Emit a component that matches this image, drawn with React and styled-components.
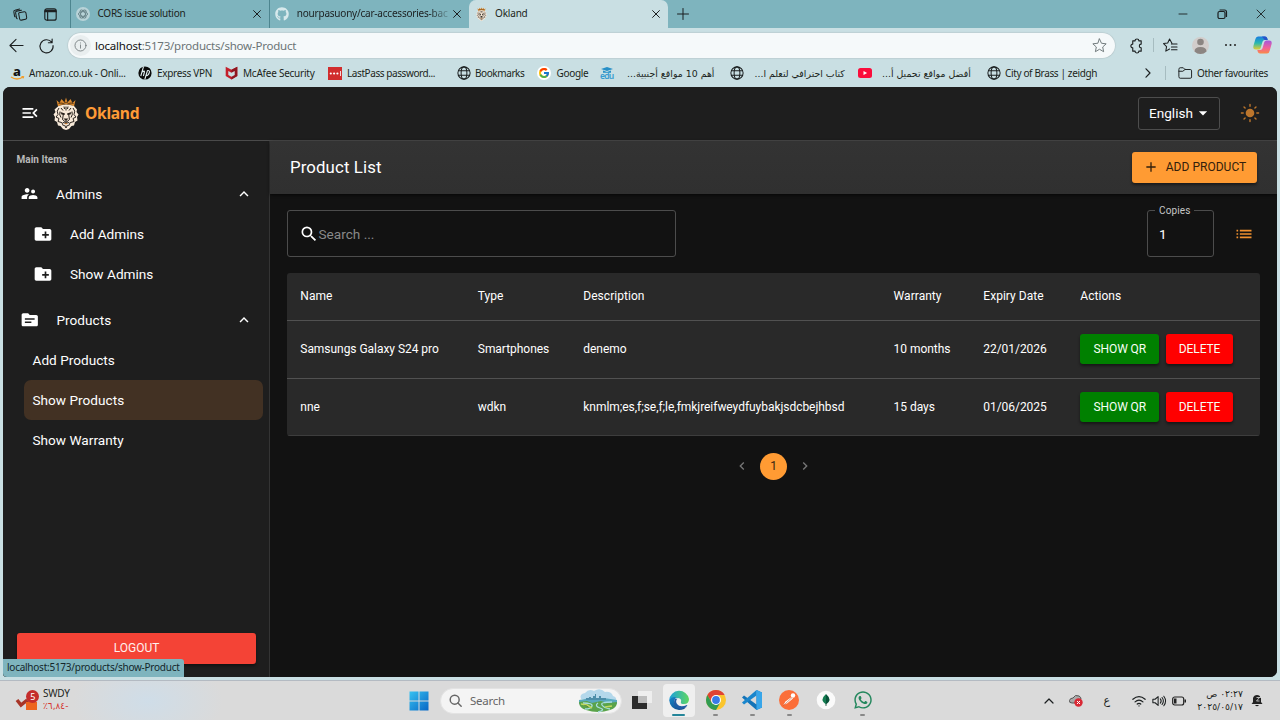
import React from "react";
import styled, { createGlobalStyle, css } from "styled-components";
import { FcGoogle } from "react-icons/fc";
import { FaGithub, FaWhatsapp } from "react-icons/fa";
import {
  MdMenuOpen, MdSupervisorAccount, MdCreateNewFolder, MdTopic, MdExpandLess,
  MdSearch, MdAdd, MdArrowDropDown, MdNavigateBefore, MdNavigateNext, MdList,
} from "react-icons/md";

const Global = createGlobalStyle`
  *, *::before, *::after { box-sizing: border-box; }
  html, body { margin: 0; padding: 0; overflow: hidden; background: #c9dfe3; }
  button { font: inherit; border: 0; margin: 0; padding: 0; background: none; color: inherit; }
  svg { display: block; flex: none; overflow: visible; }
`;

const ui = css`font-family: "Noto Sans", "DejaVu Sans", sans-serif;`;

const Screen = styled.div`
  width: 1280px; height: 720px; display: flex; flex-direction: column;
  overflow: hidden; background: #c9dfe3; color: #1b1f20; ${ui}
  white-space: nowrap;
`;

/* ---------- browser chrome ---------- */
const TitleBar = styled.header`
  height: 28px; flex: none; display: flex; align-items: center; background: #7eb4be;
`;
const TitleTools = styled.div`
  width: 70px; display: flex; gap: 16px; padding-left: 13px; align-items: center;
`;
const Tab = styled.div`
  width: 199.3px; height: 28px; display: flex; align-items: center;
  padding: 0 8px 0 5px; font-size: 10px; letter-spacing: ${(p) => p.$ls || 0}px;
  background: ${(p) => (p.$active ? "#c9dfe3" : "transparent")};
  border-left: 1px solid ${(p) => (p.$active ? "#c9dfe3" : "#4d858f")};
  border-radius: ${(p) => (p.$active ? "7px 7px 0 0" : 0)};
`;
const TabTitle = styled.span`
  flex: 1; margin: 0 0 1px 7.5px; line-height: 15px;
  ${(p) => p.$fade && css`mask-image: linear-gradient(90deg, #000 85%, #0004 96%);`}
`;
const NewTab = styled.div`padding-left: 9px;`;
const WindowControls = styled.div`
  margin-left: auto; display: flex; gap: 27px; padding-right: 13px;
`;
const AddressRow = styled.div`
  height: 35px; flex: none; display: flex; align-items: center; padding: 0 0 1px 9px;
`;
const NavButtons = styled.div`width: 59px; display: flex; gap: 15px;`;
const AddressBar = styled.div`
  width: 1047px; height: 25px; border-radius: 13px; background: #f5f9fa;
  box-shadow: 0 0 1px 0.5px #b3c4c7; display: flex; align-items: center; padding: 0 8px 0 2px;
  font-size: 11.5px; letter-spacing: -0.21px; color: #6b7476;
`;
const InfoBadge = styled.span`
  width: 21px; height: 21px; border-radius: 50%; background: #e9eeef; margin-right: 4px;
  display: grid; place-items: center;
`;
const UrlText = styled.span`flex: 1; b { font-weight: 400; color: #111; }`;
const AddressActions = styled.div`
  flex: 1; display: grid; align-items: center; padding-left: 14px;
  grid-template-columns: 24px 10px 29px 32px 29px 19px;
`;
const Divider = styled.i`width: 1px; height: 14px; background: #a6bcc0;`;
const BookmarkRow = styled.nav`
  height: 24px; flex: none; display: flex; align-items: center; padding: 0 0 4px 10px;
  font-size: 10px;
`;
const Bookmark = styled.div`
  width: ${(p) => p.$w}px; display: flex; align-items: center; gap: ${(p) => p.$gap || 4}px;
  letter-spacing: ${(p) => p.$ls ?? -0.2}px;
`;
const ArabicText = styled.span`
  font-family: "DejaVu Sans", sans-serif; font-size: 9.4px; letter-spacing: 0;
`;

/* ---------- app ---------- */
const AppFrame = styled.div`
  position: relative; margin: 0 3px; height: 590px; flex: none; overflow: hidden;
  border-radius: 7px 7px 7px 4px; background: #121212; color: #fff;
  font-family: Roboto, sans-serif; display: flex; flex-direction: column;
`;
const AppBar = styled.div`
  height: 54px; flex: none; background: #1e1e1e; border-bottom: 1px solid #4a4a4a;
  display: flex; align-items: center; padding: 0 17px 1px 17px;
`;
const MenuToggle = styled.button`width: 33px;`;
const Brand = styled.span`
  margin-left: 6px; font: 700 15.6px "Noto Sans", sans-serif; color: #ff9b36; letter-spacing: -0.3px;
`;
const LanguageSelect = styled.button`
  margin-left: auto; margin-right: 20px; width: 82px; height: 33px; border: 1px solid #4d4d4d; border-radius: 3px;
  display: flex; align-items: center; padding-left: 10px; font-size: 13.6px; letter-spacing: 0;
`;
const AppBody = styled.div`flex: 1; display: flex; min-height: 0;`;
const Sidebar = styled.aside`
  width: 267px; background: #1e1e1e; border-right: 1px solid #343434;
  display: flex; flex-direction: column; padding: 12px 0 13.5px;
`;
const SideHeading = styled.div`
  font-size: 10px; font-weight: 700; color: #b9b9b9; line-height: 14px; padding-left: 13.5px; margin-bottom: 6.5px;
  letter-spacing: 0.02px;
`;
const SideItem = styled.div`
  height: 40px; display: flex; align-items: center; font-size: 13.6px; letter-spacing: 0.02px;
  margin-left: ${(p) => p.$ml || 17}px; margin-right: 6px; padding-left: ${(p) => p.$pl || 0}px; padding-right: 10.5px;
  gap: 17px; border-radius: 7px; background: ${(p) => (p.$active ? "#423123" : "transparent")};
  svg:nth-of-type(2) { margin-left: auto; }
`;
const SideGroup = styled.div`margin-bottom: 6.5px;`;
const LogoutButton = styled.button`
  margin: auto 13px 0 14px; height: 30.5px; background: #f44336; border-radius: 3px;
  font-size: 12px; box-shadow: 0 2px 3px #0006; color: #fff0ee;
`;
const Main = styled.main`flex: 1; min-width: 0; background: #121212;`;
const PageHeader = styled.div`
  height: 53px; background: linear-gradient(#333, #303030); display: flex; align-items: center; justify-content: space-between;
  padding: 0 20px 1px; box-shadow: 0 1px 3px #000a;
`;
const PageTitle = styled.h1`margin: 0; font-size: 16.8px; font-weight: 400; letter-spacing: 0.12px;`;
const AddButton = styled.button`
  width: 125px; height: 31px; border-radius: 3px; background: #ff9b33; color: #33200c;
  display: flex; align-items: center; justify-content: center; gap: 7px; font-size: 12px;
  letter-spacing: 0.02px; box-shadow: 0 2px 3px #0007;
`;
const Filters = styled.div`
  display: flex; align-items: center; padding: 16px 23.5px 16px 17px; height: 79px;
`;
const SearchField = styled.div`
  width: 389px; height: 47px; border: 1px solid #4c4c4c; border-radius: 3px; display: flex; align-items: center;
  padding-left: 10.5px; font-size: 13.6px; color: #898989;
  svg { color: #fff; }
`;
const CopiesField = styled.div`
  position: relative; width: 67px; height: 47px; border: 1px solid #4c4c4c; border-radius: 3px;
  margin-left: auto; margin-right: 19.5px; display: flex; align-items: center; padding-left: 11px; font-size: 13.6px;
`;
const CopiesLabel = styled.span`
  position: absolute; top: -7px; left: 7px; padding: 0 4px; background: #121212; color: #c6c6c6;
  font-size: 10px; line-height: 13px; letter-spacing: 0.12px;
`;
const Table = styled.div`
  margin: 0 17px; background: #292929; border-radius: 3px; overflow: hidden;
`;
const Row = styled.div`
  display: grid; grid-template-columns: 177.5px 105.5px 310.3px 89.7px 97px 1fr; align-items: center;
  height: ${(p) => p.$h}px; border-bottom: 1px solid ${(p) => (p.$last ? "#3d3d3d" : "#515151")};
  padding-bottom: ${(p) => (p.$last ? 0 : 1)}px;
  font-size: 12px; letter-spacing: ${(p) => (p.$head ? 0.04 : -0.04)}px;
  > * { padding-left: 13.3px; }
`;
const Actions = styled.div`display: flex; gap: 6.5px;`;
const ActionButton = styled.button`
  width: ${(p) => (p.$danger ? 67.5 : 79)}px; height: 30.5px; border-radius: 3px; font-size: 12px;
  background: ${(p) => (p.$danger ? "#ff0000" : "#008000")}; letter-spacing: -0.12px; color: #f8fff5;
  box-shadow: 0 2px 3px #0007;
`;
const Pagination = styled.div`
  margin-top: 16.5px; display: flex; justify-content: center; align-items: center; gap: 10px; color: #777;
`;
const CurrentPage = styled.span`
  width: 27px; height: 27px; border-radius: 50%; background: #ff9b33; color: #39240f;
  display: grid; place-items: center; font-size: 12px;
`;
const LinkStatus = styled.div`
  position: absolute; left: 0; bottom: 0; width: 181px; height: 18px; background: #7eb4be; color: #13262a;
  border-radius: 0 3px 0 0; padding-left: 4px; line-height: 17px; font-size: 10px; letter-spacing: -0.25px; ${ui}
`;

/* ---------- taskbar ---------- */
const Taskbar = styled.footer`
  height: 40px; margin-top: auto; flex: none; display: flex; align-items: center; border-top: 1px solid #b3bac2;
  background: radial-gradient(ellipse 75px 45px at 148px 20px, #cfdde8, #cfdde800), #dadada;
`;
const StockWidget = styled.div`
  width: 408.500px; padding-left: 16px; display: flex; gap: 3px; align-items: center;
`;
const StockText = styled.div`
  font-size: 10px; line-height: 13px; letter-spacing: -0.25px; padding-bottom: 1px;
  small { display: block; font-size: 9px; color: #d5342e; font-family: "DejaVu Sans", sans-serif; letter-spacing: -0.5px; }
`;
const TaskSearch = styled.div`
  margin-left: 11.5px; width: 182px; height: 26px; border-radius: 13px; background: #f4f4f4; border: 1px solid #e3e3e3;
  display: flex; align-items: center; padding: 0 3px 0 8px; gap: 8px; font-size: 11.5px; color: #666; letter-spacing: -0.25px;
  svg:last-child { margin-left: auto; }
`;
const TaskApps = styled.div`display: flex; padding-left: 4px;`;
const TaskApp = styled.div`
  width: 32px; height: 33px; margin-right: 4.8px; border-radius: 4px; display: flex; flex-direction: column; align-items: center;
  padding-top: 6px; gap: 4px; background: ${(p) => (p.$active ? "#efefef" : "transparent")};
  &::after {
    content: ""; width: ${(p) => (p.$active ? 13 : 5)}px; height: 2px; border-radius: 1px;
    background: ${(p) => (p.$active ? "#25869a" : p.$idle ? "transparent" : "#888")};
  }
`;
const Tray = styled.div`margin-left: auto; display: flex; align-items: center; padding-right: 17px;`;
const TrayItem = styled.span`width: ${(p) => p.$w}px; display: flex; font: 11px "DejaVu Sans", sans-serif;`;
const Clock = styled.div`
  width: 46px; direction: rtl; text-align: right; font: 9.2px/12.5px "DejaVu Sans", sans-serif;
  margin-right: 8px; letter-spacing: -0.35px;
`;

/* ---------- drawings ---------- */
const Icon = ({ s = 14, vb = 16, w = 1, children }) => (
  <svg width={s} height={s} viewBox={`0 0 ${vb} ${vb}`} fill="none" stroke="currentColor" strokeWidth={w}
    strokeLinecap="round" strokeLinejoin="round">{children}</svg>
);
const Cross = () => <Icon s={8} vb={8} w={1}><path d="M.6.6l6.8 6.8M7.4.6L.6 7.4" /></Icon>;
const Globe = () => (
  <Icon s={14} w={1.15}><circle cx="8" cy="8" r="7" /><ellipse cx="8" cy="8" rx="3.3" ry="7" /><path d="M1.6 5.5h12.8M1.6 10.5h12.8" /></Icon>
);
const Lion = ({ w = 26, h = 33 }) => (
  <svg width={w} height={h} viewBox="0 0 52 66">
    <path d="M7 6l6 6 4-8 6 7 3-10 3 10 6-7 4 8 6-6-3 13q-16-6-32 0z" fill="#dd8a2d" />
    <path d="M11 13l5-1 5 1 5-3 5 3 5-1 5 1M13 17q13-5 26 0" stroke="#3b2410" strokeWidth="1.6" fill="none" />
    <path d="M11 18q15-6 31 0l6 7-1 5 4 5-3 5 1 7-5 3-2 7-5 1-5 6-6 2-6-2-5-6-5-1-2-7-5-3 1-7-3-5 4-5-2-5z" fill="#f7e9d8" />
    <g fill="none" stroke="#29221d" strokeWidth="2">
      <path d="M12 22q-6 6-2 13l-4 5 6 3-2 6 7 2M40 22q6 6 2 13l4 5-6 3 2 6-7 2M16 22l4 5M36 22l-4 5M26 19v8M22 19l1 5M30 19l-1 5M14 29q-2 7 2 12M38 29q2 7-2 12M17 50l4 8M35 50l-4 8" />
      <path d="M21 33l-2 12 7 6 7-6-2-12M26 47v4M20 51q6 3 12 0M23 56l3 6 3-6" />
    </g>
    <path d="M15 30l9 3-1 3-6-1zM37 30l-9 3 1 3 6-1zM21 43h10l-5 5z" fill="#29221d" />
    <path d="M23 52h6l-3 3z" fill="#c77526" />
  </svg>
);
const Amazon = () => (
  <svg width="15" height="15" viewBox="0 0 15 15">
    <text x="3" y="9.5" fontFamily="Noto Sans" fontSize="13" fontWeight="800" fill="#111">a</text>
    <path d="M1 11q6 4 12 0" stroke="#f39b25" strokeWidth="1.3" fill="none" /><path d="M11.5 10.5h2.3l-.7 2" stroke="#f39b25" fill="none" />
  </svg>
);
const Hp = () => (
  <svg width="14" height="14" viewBox="0 0 14 14"><circle cx="7" cy="7" r="6.6" fill="#0b0b0b" />
    <path d="M5.5.6L2.8 10M4 6q3-2 2.3.5L5.4 10M9.5 4.500L6.800 13.400M9 4.700q3.200-.7 2.300 2-.7 3-3.400 3" stroke="#e4f2f4" fill="none" strokeWidth="1.1" /></svg>
);
const Mcafee = () => (
  <svg width="13" height="14" viewBox="0 0 13 14"><path d="M.7.8l5.8 3 5.8-3v9.3l-5.8 3.4L.7 10z" fill="#c4202c" />
    <path d="M6.5 3.8l5.8-3v9.3l-5.8 3.4v-3l3-1.6V5.3l-3 1.5z" fill="#8f1620" /><path d="M3.3 5l3.2 1.8L9.7 5v4L6.5 10.8 3.3 9z" fill="#c9dfe3" /></svg>
);
const LastPass = () => (
  <svg width="14" height="13" viewBox="0 0 14 13"><path fill="#d12d2d" d="M0 0h14v13H0z" />
    <g fill="#fff"><circle cx="2.8" cy="6.5" r="1.1" /><circle cx="6.1" cy="6.5" r="1.1" /><circle cx="9.4" cy="6.5" r="1.1" /><path d="M12 4h.8v5H12z" /></g></svg>
);
const GoogleMark = styled.span`
  width: 14px; height: 14px; border-radius: 50%; background: #fff; display: grid; place-items: center;
`;
const Edu = () => (
  <svg width="15" height="15" viewBox="0 0 15 15"><path d="M7 1l6 2-6 2-6-2zM3 4.5l4 1.4 4-1.4v2.3H3z" fill="#268fc7" />
    <text x="0" y="13" fontFamily="Noto Sans" fontSize="8.5" fontWeight="600" fill="#379bd0" textLength="14">edu</text></svg>
);
const YouTube = () => (
  <svg width="14" height="10" viewBox="0 0 14 10"><rect width="14" height="10" rx="2.5" fill="#fa0d3b" /><path d="M5.5 3l3.6 2-3.6 2z" fill="#fff" /></svg>
);
const Sun = () => (
  <svg width="20" height="20" viewBox="0 0 20 20" stroke="#bd762c" strokeWidth="1.4" strokeLinecap="round">
    <circle cx="10" cy="10" r="4.3" fill="#bd762c" stroke="none" />
    <path d="M10 1.4v1.8M10 16.8v1.8M1.4 10h1.8M16.8 10h1.8M4 4l1.1 1.1M14.9 14.9L16 16M16 4l-1.1 1.1M4 16l1.1-1.1" /></svg>
);
const Copilot = () => (
  <svg width="19" height="18" viewBox="0 0 19 18">
    <defs>
      <linearGradient id="cpA" x1="0" y1="0" x2="0" y2="1"><stop stopColor="#187be2" /><stop offset=".5" stopColor="#29b9af" /><stop offset="1" stopColor="#e9cd2f" /></linearGradient>
      <linearGradient id="cpB" x1="0" y1="0" x2="0" y2="1"><stop stopColor="#a258dc" /><stop offset=".55" stopColor="#f0609b" /><stop offset="1" stopColor="#fb8a46" /></linearGradient>
    </defs>
    <path d="M5 .5h7q1.7 0 2.3 2l.4 1.5h-3q-1.7 0-2.2 1.7L7.7 12q-.5 1.6-2.2 1.6H3Q-.3 13.6.4 10L2.4 3Q3 .5 5 .5z" fill="url(#cpA)" />
    <path d="M14 17.5H7q-1.7 0-2.3-2L4.3 14h3q1.7 0 2.2-1.7L11.3 6q.5-1.6 2.2-1.6H16q3.3 0 2.6 3.6l-2 7q-.6 2.5-2.6 2.5z" fill="url(#cpB)" />
    <path d="M9 .5h3q1.7 0 2.3 2l.4 1.5h-3z" fill="#2754c9" />
  </svg>
);
const Avatar = () => (
  <svg width="17" height="17" viewBox="0 0 17 17"><circle cx="8.5" cy="8.5" r="8.5" fill="#d2cdcb" /><circle cx="8.5" cy="5" r="3.3" fill="#8b8582" /><path d="M2.5 14.5q0-4.5 6-4.500t6 4.500q-2.500 2.500-6 2.500t-6-2.500z" fill="#8b8582" /></svg>
);
const Landscape = () => (
  <svg width="40" height="24" viewBox="0 0 40 24">
    <path d="M3 10q-2-5 4-6 4-5 9-2 6-4 11 1 6-1 8 4 4 1 3 5z" fill="#b4d8eb" />
    <path d="M1 11q18-4 38 0v4H1z" fill="#59a9bf" /><path d="M8 11V9h3V8h2v1h2V7h2V5h1v4h3V7h2v2h5v2z" fill="#4c8eaa" />
    <path d="M1 13l8-1 5 2 9-2 7 2 9-1q0 6-7 8-12 4-24 0-7-2-7-8z" fill="#5aa34a" />
    <path d="M5 14q10 0 9 3t-7 3M34 13q-12 0-10 3t8 4M20 14q-4 3 2 5t-2 4" stroke="#a8dce0" strokeWidth="1.3" fill="none" />
    <path d="M3 15l6 1 5 3M27 18l7-1" stroke="#bfd85f" strokeWidth="1.5" />
  </svg>
);
const Windows = () => (
  <svg width="20" height="20" viewBox="0 0 20 20"><defs><linearGradient id="winG" x1="0" y1="0" x2="1" y2="1"><stop stopColor="#37c2f1" /><stop offset="1" stopColor="#0866c5" /></linearGradient></defs>
    <path fill="url(#winG)" d="M.5.5h9v9h-9zM10.5.5h9v9h-9zM.5 10.5h9v9h-9zM10.5 10.5h9v9h-9z" /></svg>
);
const TaskView = () => (
  <svg width="20" height="20" viewBox="0 0 20 20"><path d="M0 6h15v13H0z" fill="#2c2c2c" /><path d="M6 1h14v12H6z" fill="#f0f0f0" opacity=".92" /><path d="M6 6h9v7H6z" fill="#bdbdbd" /></svg>
);
const Edge = () => (
  <svg width="20" height="20" viewBox="0 0 20 20"><defs><linearGradient id="edA"><stop stopColor="#1ba0dc" /><stop offset="1" stopColor="#5ed760" /></linearGradient><linearGradient id="edB" x1="0" y1="0" x2="1" y2="1"><stop stopColor="#1686ca" /><stop offset="1" stopColor="#123e7d" /></linearGradient></defs>
    <path d="M.2 10A10 10 0 0 1 20 9q0 5-5 5-4 0-3-2 1-4-4-4Q3 7 .2 10z" fill="url(#edA)" />
    <path d="M.2 10Q3 6 7.5 7.5q-3 2-2 6 2 5 8 4.5 3 0 4.5-1.500Q15 20 10 20 1 19 .2 10z" fill="url(#edB)" />
    <path d="M8.500 8.500Q6 11 8 14q3 4 10 1 .6 0 0 1-4 5-10 2-5-4-2-9z" fill="#1f5ba4" /></svg>
);
const Chrome = () => (
  <svg width="20" height="20" viewBox="0 0 20 20"><circle cx="10" cy="10" r="10" fill="#fbc52d" /><path d="M10 5h8.660A10 10 0 0 0 1.340 5L5.670 12.500z" fill="#df4335" /><path d="M1.340 5A10 10 0 0 0 10 20l4.330-7.500L10 10l-4.330 2.500z" fill="#319b52" /><circle cx="10" cy="10" r="5" fill="#fff" /><circle cx="10" cy="10" r="3.900" fill="#377be8" /></svg>
);
const VsCode = () => (
  <svg width="20" height="20" viewBox="0 0 20 20"><path d="M14.500 0L20 2.500v15L14.500 20 0 7.500 2 5.500l12.500 9z" fill="#1474b8" /><path d="M14.500 5.500L2 14.500l-2-2L14.500 0z" fill="#1a86cd" /><path d="M14.500 0L20 2.500v15L14.500 20z" fill="#38a6ea" /></svg>
);
const Postman = () => (
  <svg width="20" height="20" viewBox="0 0 20 20"><circle cx="10" cy="10" r="10" fill="#fb6e39" /><circle cx="14" cy="5.500" r="2.200" fill="#fff" /><path d="M12.500 7l1.500 1.500-6 5-3.500 1.500 2-3.500z" fill="#fff" /><path d="M4.500 15.500L13 7.500" stroke="#b84d29" strokeWidth=".6" /></svg>
);
const Mongo = () => (
  <svg width="20" height="20" viewBox="0 0 20 20"><circle cx="10" cy="10" r="9.300" fill="#fafafa" /><path d="M10 4q-7 6 0 10.500z" fill="#137b50" /><path d="M10 4q7 6 0 10.500z" fill="#075239" /><path d="M10 13.500v2.500" stroke="#456e5d" /></svg>
);
const Stock = () => (
  <svg width="24" height="22" viewBox="0 0 24 22"><path d="M1 10l4 5 5-4 3 3" stroke="#a83527" strokeWidth="3.500" fill="none" /><path d="M10 12h11v8H10z" fill="#ed651e" /><circle cx="16.500" cy="6.500" r="6.500" fill="#c42c2b" /><text x="14.200" y="9.800" fontSize="9" fontFamily="Noto Sans" fill="#fff">5</text></svg>
);

/* ---------- content ---------- */
const products = [
  { name: "Samsungs Galaxy S24 pro", type: "Smartphones", description: "denemo", warranty: "10 months", expiry: "22/01/2026" },
  { name: "nne", type: "wdkn", description: "knmlm;es,f;se,f;le,fmkjreifweydfuybakjsdcbejhbsd", warranty: "15 days", expiry: "01/06/2025" },
];
const bookmarks = [
  { w: 128, icon: <Amazon />, text: "Amazon.co.uk - Onli...", ls: -0.22 },
  { w: 87, icon: <Hp />, text: "Express VPN", gap: 5, ls: -0.3 },
  { w: 103, icon: <Mcafee />, text: "McAfee Security", gap: 5, ls: -0.24 },
  { w: 129, icon: <LastPass />, text: "LastPass password...", gap: 5, ls: -0.42 },
  { w: 80, icon: <Globe />, text: "Bookmarks", ls: -0.42 },
  { w: 63, icon: <GoogleMark><FcGoogle size={12} /></GoogleMark>, text: "Google", gap: 5.5, ls: -0.3 },
  { w: 130, icon: <Edu />, text: "أهم 10 مواقع أجنبية...", gap: 12, arabic: true },
  { w: 128, icon: <Globe />, text: "كتاب احترافي لتعلم ا...", gap: 10.5, arabic: true },
  { w: 129, icon: <YouTube />, text: "أفضل مواقع تحميل أ...", gap: 10, arabic: true },
  { w: 156, icon: <Globe />, text: "City of Brass | zeidgh", ls: -0.36 },
];

const Browser = () => (
  <>
    <TitleBar>
      <TitleTools>
        <Icon s={15} w={1.1}><path d="M6.500 6.200L12 5q1.500-.2 1.800 1.200l.8 5q.2 1.500-1.200 1.800l-4.500 1q-1.500.2-1.800-1.200l-1-5.500q-.2-1 .4-1.100z" /><path d="M4.500 12.500q-.7-.3-.8-1.200l-.9-5.100q-.2-1.500 1.200-1.800l5-1M2.200 10.500q-.5-.4-.6-1L.9 5.200q-.2-1.500 1.200-1.800l5-1.200" /></Icon>
        <Icon s={13} w={1.4}><rect x="1" y="1" width="14" height="14" rx="2.5" /><path d="M1 4.500h14M1.500 3h13M4.500 5v10" /></Icon>
      </TitleTools>
      <Tab $ls={-0.26}>
        <svg width="14" height="14" viewBox="0 0 14 14"><circle cx="7" cy="7" r="7" fill="#b8d3d8" /><g fill="none" stroke="#668187" strokeWidth=".9">{[0, 60, 120].map((a) => <ellipse key={a} cx="7" cy="7" rx="4.5" ry="2.3" transform={`rotate(${a} 7 7)`} />)}</g></svg>
        <TabTitle>CORS issue solution</TabTitle><Cross />
      </Tab>
      <Tab $ls={-0.22}><FaGithub size={14} color="#d7e9ec" /><TabTitle $fade>nourpasuony/car-accessories-bac</TabTitle><Cross /></Tab>
      <Tab $active $ls={-0.2}><Lion w={13} h={14} /><TabTitle>Okland</TabTitle><Cross /></Tab>
      <NewTab><Icon s={12} vb={12}><path d="M6 .5v11M.5 6h11" /></Icon></NewTab>
      <WindowControls>
        <Icon s={12} vb={12} w={0.9}><path d="M2 6h8" /></Icon>
        <Icon s={12} vb={12} w={1.2}><rect x="2" y="3.5" width="7" height="7" rx="1.5" /><path d="M4 2h4.5Q10.5 2 10.5 4v4.5" /></Icon>
        <Icon s={12} vb={12} w={0.9}><path d="M2 2l8 8M10 2l-8 8" /></Icon>
      </WindowControls>
    </TitleBar>
    <AddressRow>
      <NavButtons>
        <Icon s={15} w={1.15}><path d="M15 8H1M7.500 1.500L1 8l6.500 6.500" /></Icon>
        <Icon s={15} w={1.2}><path d="M13.500 4.500A7 7 0 1 0 15 8M14 1v4h-4" /></Icon>
      </NavButtons>
      <AddressBar>
        <InfoBadge><Icon s={13} w={1}><circle cx="8" cy="8" r="6.8" /><path d="M8 7.300v4M8 4.800v.2" /></Icon></InfoBadge>
        <UrlText><b>localhost</b>:5173/products/show-Product</UrlText>
        <Icon s={15} w={1}><path d="M8 1l2.100 4.600 5 .6-3.700 3.400 1 5L8 12l-4.400 2.600 1-5L.9 6.200l5-.6z" /></Icon>
      </AddressBar>
      <AddressActions>
        <Icon s={15} w={1.2}><path d="M4 3h2.500a2 2 0 0 1 4 0H13v3.500a2 2 0 1 0 0 4V14h-2.500a2 2 0 0 1-4 0H4v-3.500a2 2 0 0 1 0-4z" /></Icon>
        <Divider />
        <Icon s={15} w={1.1}><path d="M9.500 5.500L7 1 5 5.300l-4.400.6 3.200 3.300-.8 4.800 4-2.200M9 6.500h6M9 9.500h6M9 12.500h6" /></Icon>
        <Avatar />
        <svg width="13" height="4" viewBox="0 0 13 4" fill="#222"><circle cx="2" cy="2" r="1" /><circle cx="6.5" cy="2" r="1" /><circle cx="11" cy="2" r="1" /></svg>
        <Copilot />
      </AddressActions>
    </AddressRow>
    <BookmarkRow>
      {bookmarks.map((b, i) => (
        <Bookmark key={i} $w={b.w} $gap={b.gap} $ls={b.ls}>
          {b.icon}{b.arabic ? <ArabicText dir="rtl">{b.text}</ArabicText> : <span>{b.text}</span>}
        </Bookmark>
      ))}
      <Bookmark $w={22}><Icon s={10} vb={10} w={1.2}><path d="M3 .8L7 5 3 9.200" /></Icon></Bookmark>
      <Bookmark $w={13}><Divider /></Bookmark>
      <Bookmark $w={92} $gap={5} $ls={-0.38}>
        <Icon s={14} w={1.1}><path d="M1 3.500q0-1.500 1.500-1.500H6l2 2h6q1.500 0 1.500 1.500v7q0 1.500-1.500 1.500H2.500Q1 14 1 12.500zM1 6h4.500L8 4" /></Icon><span>Other favourites</span>
      </Bookmark>
    </BookmarkRow>
  </>
);

const SidebarNav = () => (
  <Sidebar>
    <SideHeading>Main Items</SideHeading>
    <SideGroup>
      <SideItem><MdSupervisorAccount size={19} /><span>Admins</span><MdExpandLess size={18} /></SideItem>
      {["Add Admins", "Show Admins"].map((t) => <SideItem key={t} $ml={30}><MdCreateNewFolder size={20} /><span>{t}</span></SideItem>)}
    </SideGroup>
    <SideItem><MdTopic size={19.5} /><span>Products</span><MdExpandLess size={18} /></SideItem>
    {["Add Products", "Show Products", "Show Warranty"].map((t) => (
      <SideItem key={t} $ml={20.5} $pl={9} $active={t === "Show Products"}>{t}</SideItem>
    ))}
    <LogoutButton>LOGOUT</LogoutButton>
  </Sidebar>
);

const ProductTable = () => (
  <Table>
    <Row $h={48} $head>{["Name", "Type", "Description", "Warranty", "Expiry Date", "Actions"].map((h) => <span key={h}>{h}</span>)}</Row>
    {products.map((p, i) => (
      <Row key={p.name} $h={i ? 57 : 58} $last={i === 1}>
        <span>{p.name}</span><span>{p.type}</span><span>{p.description}</span><span>{p.warranty}</span><span>{p.expiry}</span>
        <Actions><ActionButton>SHOW QR</ActionButton><ActionButton $danger>DELETE</ActionButton></Actions>
      </Row>
    ))}
  </Table>
);

export default function App() {
  return (
    <Screen>
      <Global />
      <Browser />
      <AppFrame>
        <AppBar>
          <MenuToggle><MdMenuOpen size={20} /></MenuToggle><Lion /><Brand>Okland</Brand>
          <LanguageSelect>English<MdArrowDropDown size={20} /></LanguageSelect><Sun />
        </AppBar>
        <AppBody>
          <SidebarNav />
          <Main>
            <PageHeader><PageTitle>Product List</PageTitle><AddButton><MdAdd size={16} />ADD PRODUCT</AddButton></PageHeader>
            <Filters>
              <SearchField><MdSearch size={20} />Search ...</SearchField>
              <CopiesField><CopiesLabel>Copies</CopiesLabel>1</CopiesField>
              <MdList size={20} color="#f0902f" />
            </Filters>
            <ProductTable />
            <Pagination><MdNavigateBefore size={16} /><CurrentPage>1</CurrentPage><MdNavigateNext size={16} /></Pagination>
          </Main>
        </AppBody>
        <LinkStatus>localhost:5173/products/show-Product</LinkStatus>
      </AppFrame>
      <Taskbar>
        <StockWidget><Stock /><StockText>SWDY<small>٪٦,٨٤-</small></StockText></StockWidget>
        <Windows />
        <TaskSearch><Icon s={13} w={1.8}><circle cx="7" cy="7" r="5.5" /><path d="M11 11l4 4" /></Icon>Search<Landscape /></TaskSearch>
        <TaskApps>
          <TaskApp $idle><TaskView /></TaskApp>
          <TaskApp $active><Edge /></TaskApp>
          <TaskApp><Chrome /></TaskApp>
          <TaskApp><VsCode /></TaskApp>
          <TaskApp><Postman /></TaskApp>
          <TaskApp $idle><Mongo /></TaskApp>
          <TaskApp><FaWhatsapp size={20} color="#24875d" /></TaskApp>
        </TaskApps>
        <Tray>
          <TrayItem $w={25}><Icon s={10} vb={10} w={1.2}><path d="M1 7l4-4 4 4" /></Icon></TrayItem>
          <TrayItem $w={35}><svg width="14" height="13" viewBox="0 0 14 13"><path d="M3 9Q0 9 .5 6.500 1 4 4 4q2-4 6-2 2 1 2 3L7 9z" fill="#aaa" stroke="#555" /><circle cx="9.5" cy="8.5" r="4.2" fill="#d92935" /><path d="M8 7l3 3M11 7l-3 3" stroke="#fff" /></svg></TrayItem>
          <TrayItem $w={28}>ع</TrayItem>
          <TrayItem $w={20}><Icon s={14} w={1.4}><path d="M1 6q7-6 14 0M3.500 9q4.500-4 9 0M6 11.500q2-1.700 4 0M8 13.500v.2" /></Icon></TrayItem>
          <TrayItem $w={20}><Icon s={14} w={1.2}><path d="M1 6h2.500L7 3v10l-3.500-3H1zM9.500 5.500q2 2.500 0 5M11.500 4q3 4 0 8M13.500 2.500q4 5.500 0 11" /></Icon></TrayItem>
          <TrayItem $w={25.5}><svg width="14" height="10" viewBox="0 0 14 10"><rect x=".7" y="1" width="11" height="8" rx="2" fill="none" stroke="#222" strokeWidth="1.2" /><path d="M2 2.500h2.500v5H2zM12.500 3.500H14v3h-1.500z" fill="#222" /></svg></TrayItem>
          <Clock>٠٢:٢٧ ص<br />٢٠٢٥/٠٥/١٧</Clock>
          <svg width="12" height="13" viewBox="0 0 12 13"><path d="M1 9.500L2 8V4q1-3 4-3t4 3v4l1.500 2H.5zM4 11h4q-2 2.500-4 0z" fill="#222" /><path d="M5.500 3.500h3l-3 3.500h3M8.500 1h2.500L8.500 3.500H11" stroke="#ddd" fill="none" strokeWidth=".8" /></svg>
        </Tray>
      </Taskbar>
    </Screen>
  );
}
